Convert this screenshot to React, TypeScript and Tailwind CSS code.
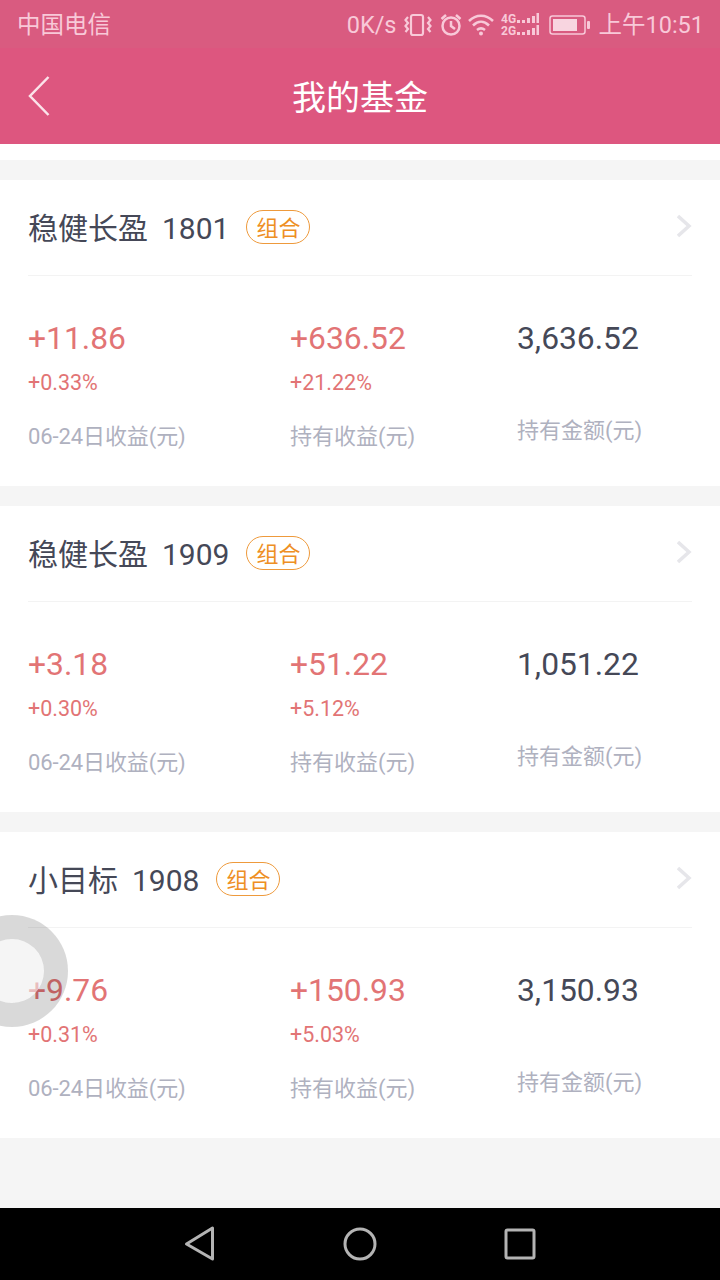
const font = { fontFamily: '"Roboto","Noto Sans CJK SC",sans-serif' };

function Row({ name, code, a, ap, b, bp, c }: { name: string; code: string; a: string; ap: string; b: string; bp: string; c: string }) {
  return (
    <div className="h-[306px] bg-white px-[28px] flex flex-col">
      <div className="h-[96px] flex items-center border-b border-[#f3f3f3] relative">
        <div className="text-[30px] leading-[40px] text-[#454857] mt-[3px] flex">
          <span>{name}</span>
          <span className="ml-[14px] text-[30px]">{code}</span>
        </div>
        <div className="ml-[17px] mt-[-1px] w-[64px] h-[34px] rounded-full border border-[#ee9a3c] text-[#ee8f24] text-[22px] leading-[35px] text-center">组合</div>
        <svg className="ml-auto mr-[-1px] mt-[-3px]" width="16" height="24" viewBox="0 0 16 24" fill="none"><path d="M1 2 L12 12 L1 22" stroke="#e6e6ea" strokeWidth="3.500" /></svg>
      </div>
      <div className="flex flex-1 pt-[42px]">
        <div className="w-[262px]">
          <div className="text-[31.8px] leading-[40px] text-[#e27475]">{a}</div>
          <div className="text-[21.5px] leading-[26px] mt-[12px] text-[#e27475]">{ap}</div>
          <div className="text-[22px] tracking-[-0.1px] leading-[30px] mt-[26px] text-[#afb1bf]">06-24日收益(元)</div>
        </div>
        <div className="w-[227px]">
          <div className="text-[31.8px] leading-[40px] text-[#e27475]">{b}</div>
          <div className="text-[21.5px] leading-[26px] mt-[12px] text-[#e27475]">{bp}</div>
          <div className="text-[22px] leading-[30px] mt-[26px] text-[#afb1bf]">持有收益(元)</div>
        </div>
        <div>
          <div className="text-[31.8px] leading-[40px] text-[#454857]">{c}</div>
          <div className="text-[22px] leading-[30px] mt-[58px] text-[#afb1bf]">持有金额(元)</div>
        </div>
      </div>
    </div>
  );
}

export default function App() {
  return (
    <div className="w-[720px] h-[1280px] relative overflow-hidden bg-[#f5f5f5] flex flex-col" style={font}>
      <div className="h-[48px] bg-[#d95b80] flex items-center pl-[17px] pr-[16px] pt-[2px] text-[#f8c9d8]">
        <span className="text-[23.500px] mt-[1px]">中国电信</span>
        <div className="ml-auto flex items-center">
          <span className="text-[23.500px] leading-none mt-[1px]">0K/s</span>
          <svg className="ml-[8px]" width="28" height="24" viewBox="0 0 28 24" fill="none" stroke="#f8c9d8" strokeWidth="2.200">
            <rect x="7" y="2" width="12" height="20" rx="2" />
            <path d="M4 4 L1.500 7 L4 10 L1.500 13 L4 16 L1.500 19 M24 4 L26.500 7 L24 10 L26.500 13 L24 16 L26.500 19" />
          </svg>
          <svg className="ml-[8px]" width="22" height="24" viewBox="0 0 22 24" fill="none" stroke="#f8c9d8" strokeWidth="2.500">
            <circle cx="11" cy="13" r="8.500" />
            <path d="M11 8 V13 L15 16 M1.500 6 L6 2 M20.500 6 L16 2" />
          </svg>
          <svg className="ml-[6px]" width="26" height="24" viewBox="0 0 26 24" fill="none" stroke="#f8c9d8" strokeWidth="2.500">
            <path d="M1 8 C8 1 18 1 25 8 M5 12.500 C10 7.500 16 7.500 21 12.500 M9 17 C11.500 15 14.500 15 17 17" />
            <circle cx="13" cy="20.500" r="2" fill="#f8c9d8" stroke="none" />
          </svg>
          <svg className="ml-[7px]" width="38" height="24" viewBox="0 0 38 24" fill="#f8c9d8">
            <text x="0" y="10" fontSize="12" fontWeight="700">4G</text>
            <text x="0" y="22" fontSize="12" fontWeight="700">2G</text>
            <rect x="16" y="7" width="3" height="3" /><rect x="21" y="7" width="3" height="3" /><rect x="26" y="5" width="3" height="5" /><rect x="31" y="3" width="3" height="7" /><rect x="35.500" y="0" width="2.500" height="10" />
            <rect x="16" y="19" width="3" height="3" /><rect x="21" y="19" width="3" height="3" /><rect x="26" y="17" width="3" height="5" /><rect x="31" y="15" width="3" height="7" /><rect x="35.500" y="12" width="2.500" height="10" />
          </svg>
          <svg className="ml-[10px]" width="41" height="22" viewBox="0 0 41 22" fill="none">
            <rect x="1" y="2" width="35" height="18" rx="2.500" stroke="#f8c9d8" strokeWidth="1.500" />
            <rect x="4" y="5" width="24" height="12" fill="#f8d5e0" />
            <rect x="38" y="7" width="3" height="8" rx="1" fill="#f8c9d8" />
          </svg>
          <span className="text-[23.500px] leading-none ml-[8px] mt-[1px]">上午10:51</span>
        </div>
      </div>
      <div className="h-[96px] bg-[#dd567f] flex items-center justify-center relative">
        <svg className="absolute left-[27px] top-[27px]" width="24" height="42" viewBox="0 0 24 42" fill="none">
          <path d="M21.500 2 L3 21 L21.500 40" stroke="#fbe3ea" strokeWidth="2.500" />
        </svg>
        <span className="text-[34px] text-white leading-none mt-[4px]">我的基金</span>
      </div>
      <div className="h-[16px] bg-white" />
      <div className="flex flex-col gap-[20px] pt-[20px]">
        <Row name="稳健长盈" code="1801" a="+11.86" ap="+0.33%" b="+636.52" bp="+21.22%" c="3,636.52" />
        <Row name="稳健长盈" code="1909" a="+3.18" ap="+0.30%" b="+51.22" bp="+5.12%" c="1,051.22" />
        <Row name="小目标" code="1908" a="+9.76" ap="+0.31%" b="+150.93" bp="+5.03%" c="3,150.93" />
      </div>
      <div className="mt-auto h-[72px] bg-black flex items-center justify-center relative">
        <svg width="400" height="72" viewBox="0 0 400 72" fill="none" stroke="#b4b4b4" strokeWidth="3" strokeLinejoin="round">
          <path d="M26.500 36 L52.500 20 V51 Z" />
          <circle cx="200" cy="36" r="15" />
          <rect x="346" y="22" width="28" height="28" rx="1.500" />
        </svg>
      </div>
      <div className="absolute left-[-44px] top-[915px] w-[112px] h-[112px] rounded-full border-[24px] border-black/15 bg-[#eeeeee]/60 bg-clip-padding" />
    </div>
  );
}
